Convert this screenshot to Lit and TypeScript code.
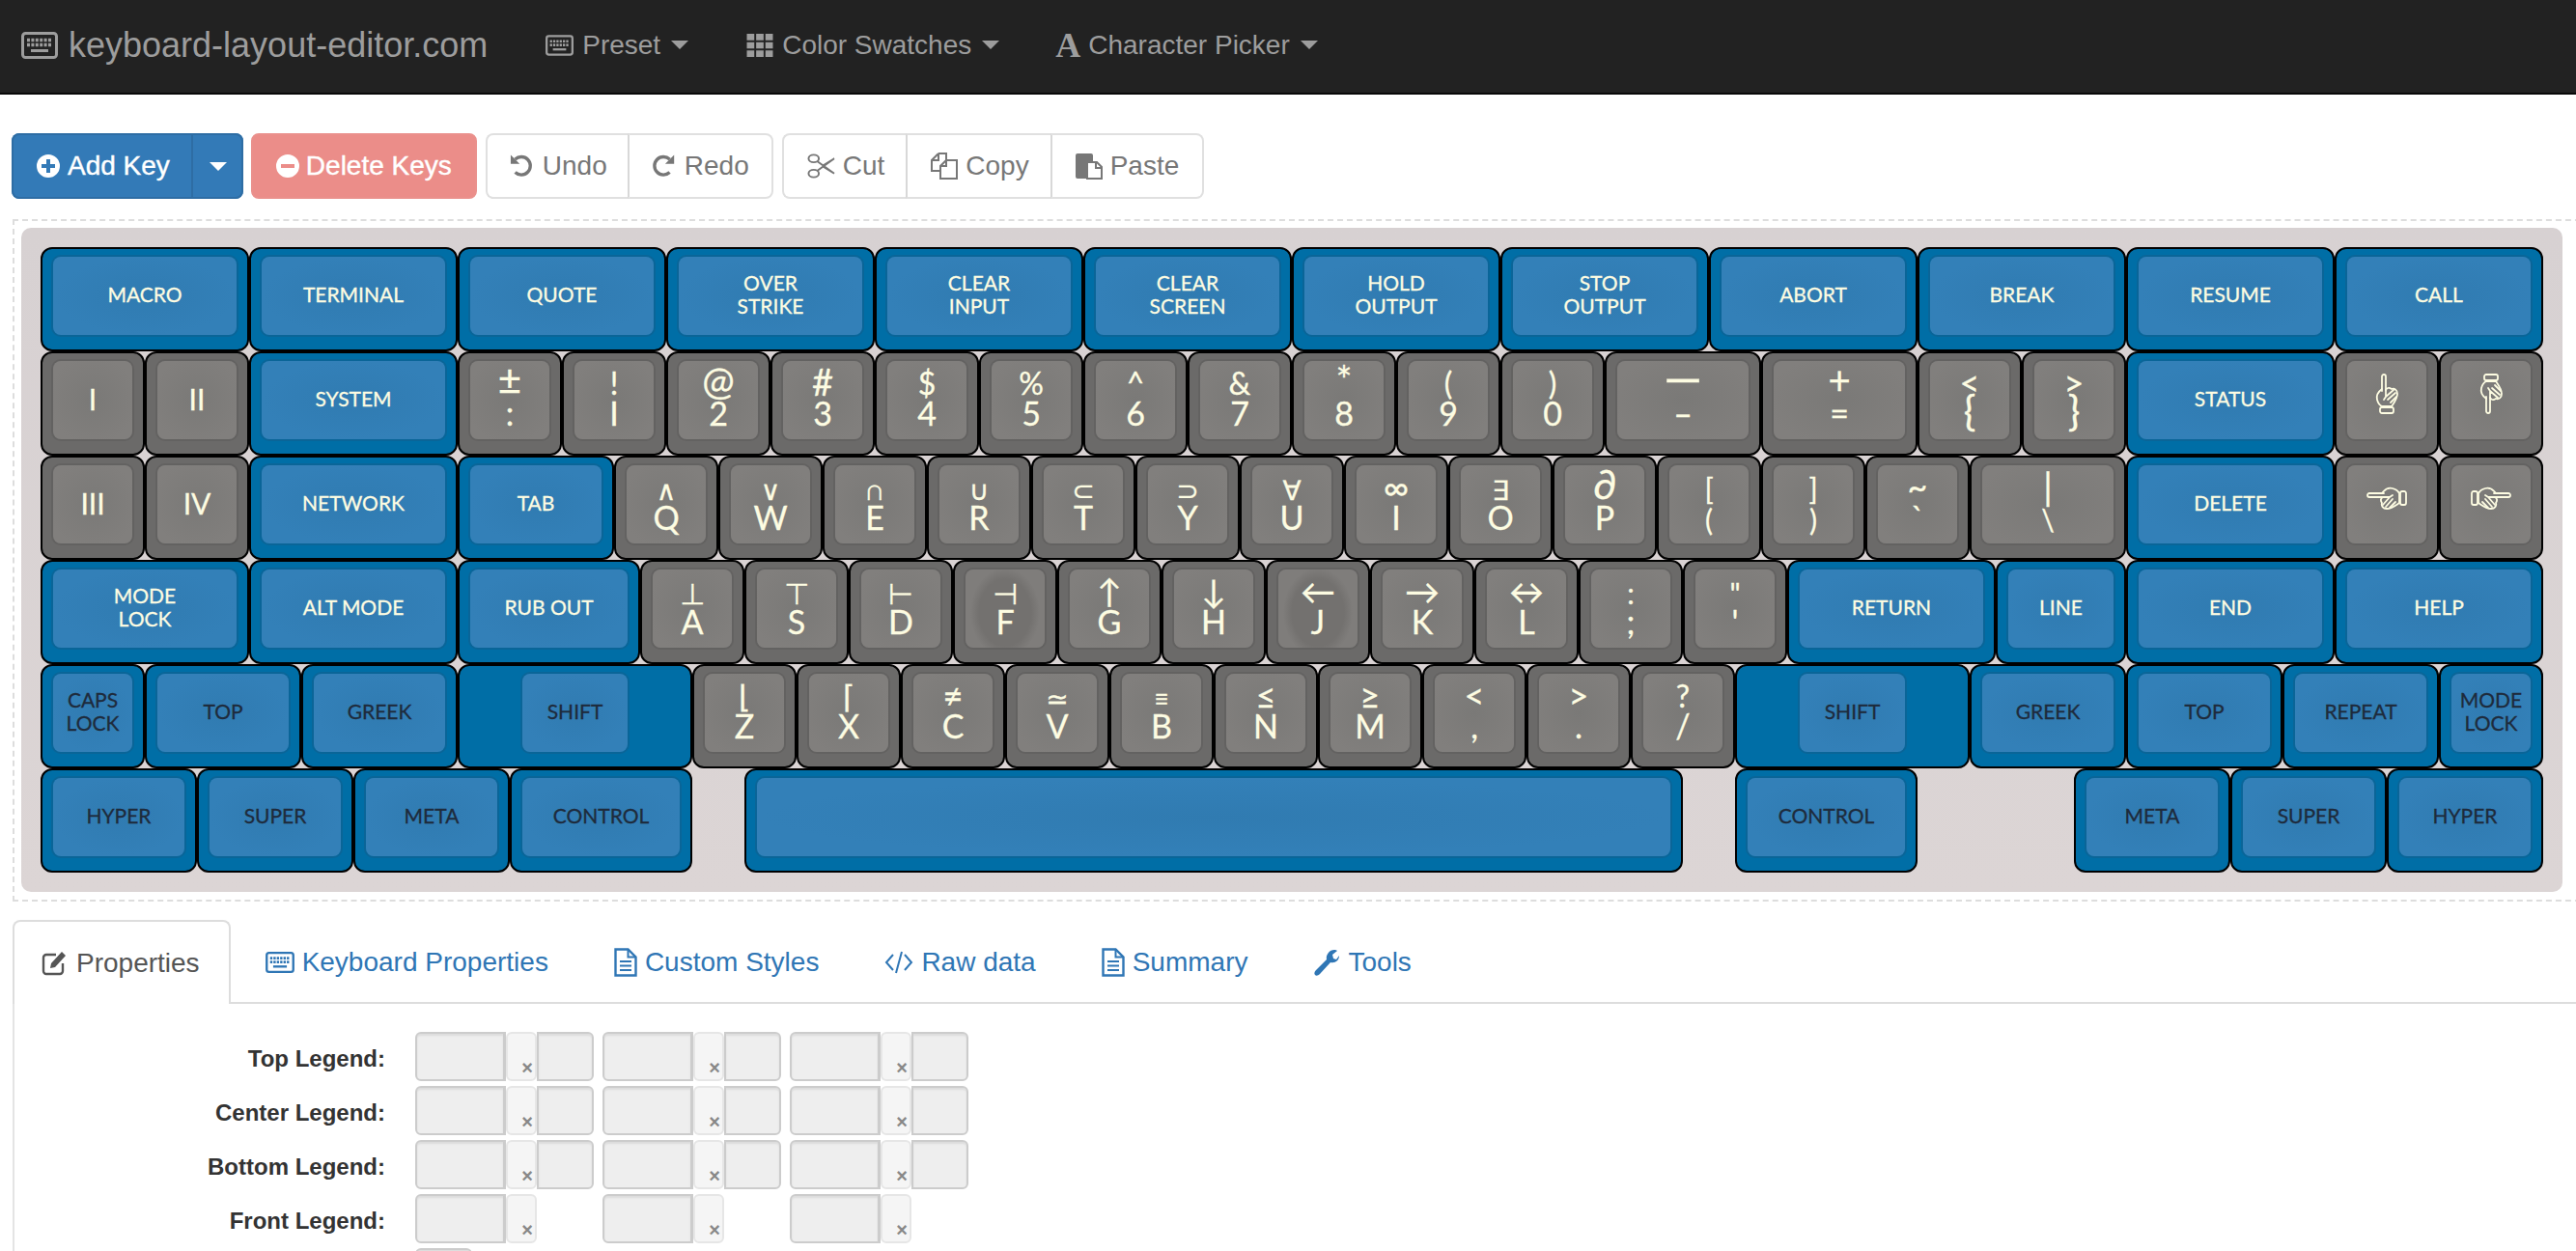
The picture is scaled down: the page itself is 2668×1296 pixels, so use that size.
import { LitElement, html, css, svg } from 'lit';
import { customElement } from 'lit/decorators.js';

type KeyDef = { w: number; kind: 'blue' | 'dark' | 'gray'; top?: string; bottom?: string; cap?: number; dish?: boolean; gap?: boolean };

const b = (w: number, top = ''): KeyDef => ({ w, kind: 'blue', top });
const d = (w: number, top = '', cap?: number): KeyDef => ({ w, kind: 'dark', top, cap });
const g = (top: string, bottom = '', w = 1, dish = false): KeyDef => ({ w, kind: 'gray', top, bottom, dish });
const gap = (w: number): KeyDef => ({ w, kind: 'gray', gap: true });

const rows: KeyDef[][] = [
  [b(2, 'MACRO'), b(2, 'TERMINAL'), b(2, 'QUOTE'), b(2, 'OVER\nSTRIKE'), b(2, 'CLEAR\nINPUT'), b(2, 'CLEAR\nSCREEN'), b(2, 'HOLD\nOUTPUT'), b(2, 'STOP\nOUTPUT'), b(2, 'ABORT'), b(2, 'BREAK'), b(2, 'RESUME'), b(2, 'CALL')],
  [g('I'), g('II'), b(2, 'SYSTEM'), g('±', ':'), g('!', 'I'), g('@', '2'), g('#', '3'), g('$', '4'), g('%', '5'), g('^', '6'), g('&', '7'), g('*', '8'), g('(', '9'), g(')', '0'), g('—', '–', 1.5), g('+', '=', 1.5), g('<', '{'), g('>', '}'), b(2, 'STATUS'), g('☝'), g('☟')],
  [g('III'), g('IV'), b(2, 'NETWORK'), b(1.5, 'TAB'), g('∧', 'Q'), g('∨', 'W'), g('∩', 'E'), g('∪', 'R'), g('⊂', 'T'), g('⊃', 'Y'), g('∀', 'U'), g('∞', 'I'), g('∃', 'O'), g('∂', 'P'), g('[', '('), g(']', ')'), g('~', '`'), g('|', '\\', 1.5), b(2, 'DELETE'), g('☜'), g('☞')],
  [b(2, 'MODE\nLOCK'), b(2, 'ALT MODE'), b(1.75, 'RUB OUT'), g('⊥', 'A'), g('⊤', 'S'), g('⊢', 'D'), g('⊣', 'F', 1, true), g('↑', 'G'), g('↓', 'H'), g('←', 'J', 1, true), g('→', 'K'), g('↔', 'L'), g(':', ';'), g('"', "'"), b(2, 'RETURN'), b(1.25, 'LINE'), b(2, 'END'), b(2, 'HELP')],
  [d(1, 'CAPS\nLOCK'), d(1.5, 'TOP'), d(1.5, 'GREEK'), d(2.25, 'SHIFT', 1.25), g('⌊', 'Z'), g('⌈', 'X'), g('≠', 'C'), g('≃', 'V'), g('≡', 'B'), g('≤', 'N'), g('≥', 'M'), g('<', ','), g('>', '.'), g('?', '/'), d(2.25, 'SHIFT', 1.25), d(1.5, 'GREEK'), d(1.5, 'TOP'), d(1.5, 'REPEAT'), d(1, 'MODE\nLOCK')],
  [d(1.5, 'HYPER'), d(1.5, 'SUPER'), d(1.5, 'META'), d(1.75, 'CONTROL'), gap(0.5), d(9), gap(0.5), d(1.75, 'CONTROL'), gap(1.5), d(1.5, 'META'), d(1.5, 'SUPER'), d(1.5, 'HYPER')],
];

const UNIT = 108;
const TOP_SIZE = 32;
const BASELINE = 0.387; // Lato: distance from line centre to baseline, in em

// top legends that are not the default size
const topSizes: Record<string, number> = {
  '@': 40, '#': 38, '*': 40,
  '—': 50, '+': 40, '<': 36, '>': 36, '±': 42,
  '∧': 28, '∨': 28, '∩': 28, '∪': 28, '⊂': 28, '⊃': 28, '∀': 28, '∞': 36, '∃': 28, '∂': 42,
  '⊥': 30, '⊤': 30, '⊢': 30, '⊣': 30, '↑': 34, '↓': 34, '←': 36, '→': 36, '↔': 36,
  '[': 30, ']': 30, '~': 36, '|': 38, '"': 30, ':': 30,
  '≠': 36, '≃': 28, '≡': 26, '≤': 36, '≥': 36,
};
// bottom legends that are not the default size
const bottomSizes: Record<string, number> = { '(': 30, ')': 30, '\\': 30, '{': 42, '}': 42 };

const hands: Record<string, string> = { '☝': 'up', '☟': 'down', '☜': 'left', '☞': 'right' };

const handShape = svg`
  <path d="M7 18V3a2 2 0 0 1 4 0v14" />
  <path d="M7 16c-4 3-6 7-5 11s3 6 5 7h10c2-3 6-8 6-13 0-4-3-6-6-5-3-2-5-1-6 1" />
  <path d="M11 17v7l-2 3M11 24l8-7M13 27l8-7M16 30l6-6" />
  <rect x="5" y="35" width="14" height="6" rx="2" />
`;

// font-awesome style icons, redrawn by hand
const icons = {
  keyboard: svg`<rect x="1.5" y="1.5" width="35" height="25" rx="3" fill="none" stroke="currentColor" stroke-width="3"/><path d="M6 8.5h26M6 13.5h26" stroke="currentColor" stroke-width="3.4" stroke-dasharray="3 1.4"/><path d="M10 19.5h18" stroke="currentColor" stroke-width="3"/>`,
  th: svg`<path d="M0 1h8v7H0zM10 1h8v7h-8zM20 1h8v7h-8zM0 10h8v7H0zM10 10h8v7h-8zM20 10h8v7h-8zM0 19h8v7H0zM10 19h8v7h-8zM20 19h8v7h-8z" fill="currentColor"/>`,
  plus: svg`<path fill-rule="evenodd" fill="currentColor" d="M12 0a12 12 0 1 0 0 24 12 12 0 0 0 0-24zM10 5h4v5h5v4h-5v5h-4v-5H5v-4h5z"/>`,
  minus: svg`<path fill-rule="evenodd" fill="currentColor" d="M12 0a12 12 0 1 0 0 24 12 12 0 0 0 0-24zM5 10h14v4H5z"/>`,
  undo: svg`<path d="M6 6.500A10 10 0 1 1 6 21" fill="none" stroke="currentColor" stroke-width="3.6"/><path d="M1 1.500v10h10z" fill="currentColor"/>`,
  redo: svg`<path d="M20 6.500A10 10 0 1 0 20 21" fill="none" stroke="currentColor" stroke-width="3.6"/><path d="M25 1.500v10H15z" fill="currentColor"/>`,
  cut: svg`<g fill="none" stroke="currentColor" stroke-width="2"><ellipse cx="7" cy="6" rx="5.500" ry="4"/><ellipse cx="7" cy="22" rx="5.500" ry="4"/><path d="M11 9l18 13M11 19 29 6M29 6 16 14M29 22 16 14"/></g>`,
  copy: svg`<g fill="none" stroke="currentColor" stroke-width="2"><path d="M8 1h8v7M8 1 1 8v11h9M8 1v7H1"/><path d="M16 8h11v19H10V14z" fill="#fff"/><path d="M16 8v6h-6"/></g>`,
  paste: svg`<path fill="currentColor" d="M0 3a2 2 0 0 1 2-2h14a2 2 0 0 1 2 2v6h-5v18H2a2 2 0 0 1-2-2z"/><path d="M15 10h7l5 5v12H12V10z" fill="#fff" stroke="currentColor" stroke-width="2"/><path d="M21 10v6h6" fill="none" stroke="currentColor" stroke-width="2"/>`,
  edit: svg`<path d="M22 14v8a3 3 0 0 1-3 3H5a3 3 0 0 1-3-3V8a3 3 0 0 1 3-3h10" fill="none" stroke="currentColor" stroke-width="2.400"/><path d="M10 14 21 2l4 4-11 12-5 1z" fill="currentColor"/>`,
  file: svg`<path d="M1.500 1.500h13l8 8v19h-21z" fill="none" stroke="currentColor" stroke-width="2.400"/><path d="M14.500 1.500v8h8M6 14h12M6 18.500h12M6 23h12" fill="none" stroke="currentColor" stroke-width="2"/>`,
  code: svg`<path d="M9 6 2 14l7 8M21 6l7 8-7 8M18 3l-6 22" fill="none" stroke="currentColor" stroke-width="2"/>`,
  wrench: svg`<path fill="currentColor" d="M27 7c0 5-4 8-9 7L7 26c-2 2-4 2-5 1s-1-3 1-5l11-11C13 6 17 1 22 1c1 0 2 0 3 1l-5 4 1 4 3 1 3-4z"/>`,
};

const icon = (name: keyof typeof icons, w: number, h: number, vb: string) =>
  html`<svg class="icon" width=${w} height=${h} viewBox=${vb}>${icons[name]}</svg>`;

// keeps every legend on the same baseline whatever its size
const legendStyle = (size: number) =>
  `font-size:${size}px;transform:translateY(${(-BASELINE * (size - TOP_SIZE)).toFixed(1)}px)`;

@customElement('kb-key')
export class KbKey extends LitElement {
  static properties = { def: { attribute: false } };
  def!: KeyDef;

  static styles = css`
    :host {
      display: block;
      height: 108px;
      flex: none;
    }
    .cap {
      box-sizing: border-box;
      height: 108px;
      border: 2px solid #000;
      border-radius: 12px;
      padding: 8px 11px 15px;
      display: flex;
      justify-content: center;
      font-family: Lato, 'DejaVu Sans', sans-serif;
      -webkit-text-stroke: 0.3px currentColor;
    }
    .blue {
      background: #006ea6;
    }
    .gray {
      background: #6b6a69;
    }
    .top {
      box-sizing: border-box;
      flex: 1;
      height: 81px;
      border-radius: 8px;
      display: flex;
      flex-direction: column;
      align-items: center;
      justify-content: center;
      text-align: center;
      white-space: pre-line;
      color: #fdfce2;
    }
    .blue .top {
      font-size: 21px;
      line-height: 24px;
      box-shadow: 0 0 0 2px #0a6598;
      background: radial-gradient(ellipse at center, #307bb1 0%, #3380b8 70%);
      padding-bottom: 4px;
    }
    .dark .top {
      color: #1e2b3c;
    }
    .gray .top {
      font-size: 32px;
      line-height: 32px;
      box-shadow: 0 0 0 2px #636261;
      background: radial-gradient(ellipse at center, #7a7977 0%, #817f7d 80%);
      padding-bottom: 3px;
    }
    .gray .top.dish {
      background: radial-gradient(ellipse 36px 46px at 50% 55%, #73716f 0 75%, #7f7d7b 100%);
    }
    .single {
      font-size: 30px;
    }
    .hand {
      width: 24px;
      height: 42px;
      margin-bottom: 10px;
      fill: none;
      stroke: #fdfce2;
      stroke-width: 1.8;
      overflow: visible;
      stroke-linejoin: round;
      stroke-linecap: round;
    }
    .hand.down {
      transform: scaleY(-1);
    }
    .hand.left {
      transform: scaleX(-1) rotate(90deg);
    }
    .hand.right {
      transform: rotate(90deg);
    }
  `;

  render() {
    const k = this.def;
    const w = k.w * UNIT;
    if (k.gap) return html`<div style="width:${w}px"></div>`;
    const capStyle = k.cap ? `flex: 0 0 ${k.cap * UNIT - 26}px` : '';
    const blue = k.kind !== 'gray';
    const hand = hands[k.top ?? ''];
    return html`
      <div class="cap ${blue ? 'blue' : 'gray'} ${k.kind === 'dark' ? 'dark' : ''}" style="width:${w}px">
        <div class="top ${k.dish ? 'dish' : ''}" style=${capStyle}>
          ${blue
            ? k.top
            : hand
              ? html`<svg class="hand ${hand}" viewBox="0 0 24 42" aria-label=${k.top ?? ''}>${handShape}</svg>`
              : k.bottom
                ? html`<div style=${legendStyle(topSizes[k.top ?? ''] ?? TOP_SIZE)}>${k.top}</div>
                    <div style=${legendStyle(bottomSizes[k.bottom] ?? 34)}>${k.bottom}</div>`
                : html`<div class="single">${k.top}</div>`}
        </div>
      </div>
    `;
  }
}

@customElement('app-root')
export class AppRoot extends LitElement {
  static styles = css`
    :host {
      display: block;
      width: 2668px;
      height: 1296px;
      overflow: hidden;
      background: #fff;
      font-family: 'Liberation Sans', Arial, sans-serif;
      font-size: 28px;
      color: #333;
    }
    .icon {
      flex: none;
      display: block;
    }

    /* navbar */
    .navbar {
      box-sizing: border-box;
      display: flex;
      align-items: center;
      height: 98px;
      padding-bottom: 3px;
      background: #222;
      border-bottom: 2px solid #080808;
      color: #9d9d9d;
    }
    .brand {
      display: flex;
      align-items: center;
      gap: 11px;
      padding: 0 30px 0 22px;
      font-size: 36px;
    }
    .nav-item {
      display: flex;
      align-items: center;
      padding: 0 30px;
      gap: 9px;
    }
    .caret {
      width: 0;
      height: 0;
      border-left: 9px solid transparent;
      border-right: 9px solid transparent;
      border-top: 9px solid currentColor;
      margin-left: 2px;
    }
    .font-a {
      font-family: 'Liberation Serif', serif;
      font-weight: bold;
      font-size: 36px;
      line-height: 36px;
      margin: 0 -1px 0 -2px;
    }

    /* toolbar */
    .toolbar {
      display: flex;
      gap: 9px;
      margin: 40px 0 0 12px;
    }
    .group {
      display: flex;
    }
    .btn {
      box-sizing: border-box;
      height: 68px;
      display: flex;
      align-items: center;
      gap: 8px;
      padding: 0 24px;
      border: 2px solid #e0e0e0;
      background: #fff;
      color: #777;
      margin-left: -2px;
      border-right-width: 0;
    }
    .btn.tight {
      padding: 0 23px;
    }
    .group .btn:first-child {
      border-radius: 8px 0 0 8px;
      margin-left: 0;
    }
    .group .btn:last-child {
      border-radius: 0 8px 8px 0;
      border-right-width: 2px;
    }
    .btn + .btn {
      border-left: 2px solid #d8d8d8;
    }
    .primary {
      background: #337ab7;
      color: #fff;
      -webkit-text-stroke: 0.4px #fff;
      margin-right: -1px;
      border-radius: 8px;
    }
    .primary .btn {
      background: #337ab7;
      border-color: #2e6da4;
      color: #fff;
    }
    .primary .drop {
      padding: 0 15px;
    }
    .danger {
      box-sizing: border-box;
      height: 68px;
      display: flex;
      align-items: center;
      gap: 7px;
      padding: 0 24px;
      border-radius: 8px;
      border: 2px solid #ea908c;
      background: #eb8d89;
      color: #fff;
      -webkit-text-stroke: 0.4px #fff;
    }

    /* keyboard */
    .stage {
      box-sizing: border-box;
      width: 2700px;
      margin: 21px 0 0 13px;
      padding: 7px 0 8px 7px;
      border: 2px dashed #ddd;
    }
    .board {
      box-sizing: border-box;
      width: 2632px;
      padding: 20px;
      border-radius: 10px;
      background: linear-gradient(#d7d1d2, #dcd5d5);
    }
    .row {
      display: flex;
    }

    /* tabs */
    .tabs {
      display: flex;
      margin: 19px 0 0 13px;
      height: 85px;
      border-bottom: 2px solid #ddd;
    }
    .tab {
      box-sizing: border-box;
      display: flex;
      align-items: center;
      gap: 8px;
      height: 85px;
      padding: 2px 32px 0;
      margin-left: 4px;
      color: #2f76b5;
    }
    .tab.active {
      height: 87px;
      margin-left: 0;
      padding: 0 30px 0 28px;
      color: #555;
      background: #fff;
      border: 2px solid #ddd;
      border-bottom: 0;
      border-radius: 8px 8px 0 0;
    }

    /* legend form */
    .panel {
      margin-left: 13px;
      padding-top: 29px;
      border-left: 2px solid #e4e4e4;
      height: 300px;
    }
    .form-row {
      display: flex;
      align-items: center;
      height: 51px;
      margin-bottom: 5px;
    }
    .form-row label {
      box-sizing: border-box;
      width: 384px;
      margin-right: 31px;
      text-align: right;
      font-size: 24px;
      font-weight: bold;
      padding-top: 4px;
    }
    .cell {
      display: flex;
      width: 185px;
      margin-right: 9px;
    }
    .field {
      box-sizing: border-box;
      height: 51px;
      margin: 0;
      padding: 0;
      background: #eee;
      border: 2px solid #ccc;
      box-shadow: inset 0 2px 2px rgba(0, 0, 0, 0.075);
    }
    .field.main {
      width: 94px;
      border-radius: 6px 0 0 6px;
      border-right-width: 3px;
    }
    .field.small {
      width: 59px;
      border-radius: 0 6px 6px 0;
    }
    .field.solo {
      width: 59px;
      border-radius: 6px 6px 0 0;
    }
    .clear {
      box-sizing: border-box;
      width: 32px;
      height: 51px;
      background: #f5f5f5;
      border: 2px solid #e6e6e6;
      border-radius: 6px;
      display: flex;
      align-items: flex-end;
      justify-content: flex-end;
      padding: 0 2px 2px 0;
      color: #888;
      font-size: 20px;
      font-weight: bold;
      line-height: 20px;
    }
  `;

  private legendRow(label: string, withSmall: boolean) {
    return html`
      <div class="form-row">
        <label>${label}</label>
        ${[0, 1, 2].map(
          () => html`
            <div class="cell">
              <input class="field main" />
              <div class="clear">×</div>
              ${withSmall ? html`<input class="field small" />` : ''}
            </div>
          `
        )}
      </div>
    `;
  }

  render() {
    return html`
      <nav class="navbar">
        <div class="brand">${icon('keyboard', 38, 28, '0 0 38 28')}<span>keyboard-layout-editor.com</span></div>
        <div class="nav-item">${icon('keyboard', 29, 22, '0 0 38 28')}<span>Preset</span><i class="caret"></i></div>
        <div class="nav-item">${icon('th', 28, 26, '0 0 28 27')}<span>Color Swatches</span><i class="caret"></i></div>
        <div class="nav-item"><span class="font-a">A</span><span>Character Picker</span><i class="caret"></i></div>
      </nav>

      <div class="toolbar">
        <div class="group primary">
          <div class="btn">${icon('plus', 24, 24, '0 0 24 24')}<span>Add Key</span></div>
          <div class="btn drop"><i class="caret"></i></div>
        </div>
        <div class="danger">${icon('minus', 24, 24, '0 0 24 24')}<span>Delete Keys</span></div>
        <div class="group">
          <div class="btn tight">${icon('undo', 26, 28, '0 0 28 28')}<span>Undo</span></div>
          <div class="btn tight">${icon('redo', 26, 28, '0 0 28 28')}<span>Redo</span></div>
        </div>
        <div class="group">
          <div class="btn">${icon('cut', 29, 28, '0 0 30 28')}<span>Cut</span></div>
          <div class="btn">${icon('copy', 28, 28, '0 0 28 28')}<span>Copy</span></div>
          <div class="btn">${icon('paste', 28, 28, '0 0 28 28')}<span>Paste</span></div>
        </div>
      </div>

      <div class="stage">
        <div class="board">
          ${rows.map((row) => html`<div class="row">${row.map((k) => html`<kb-key .def=${k}></kb-key>`)}</div>`)}
        </div>
      </div>

      <div class="tabs">
        <div class="tab active">${icon('edit', 28, 28, '0 0 28 28')}<span>Properties</span></div>
        <div class="tab">${icon('keyboard', 30, 22, '0 0 38 28')}<span>Keyboard Properties</span></div>
        <div class="tab">${icon('file', 24, 30, '0 0 24 30')}<span>Custom Styles</span></div>
        <div class="tab">${icon('code', 30, 28, '0 0 30 28')}<span>Raw data</span></div>
        <div class="tab">${icon('file', 24, 30, '0 0 24 30')}<span>Summary</span></div>
        <div class="tab">${icon('wrench', 28, 28, '0 0 28 28')}<span>Tools</span></div>
      </div>

      <div class="panel">
        ${this.legendRow('Top Legend:', true)}
        ${this.legendRow('Center Legend:', true)}
        ${this.legendRow('Bottom Legend:', true)}
        ${this.legendRow('Front Legend:', false)}
        <div class="form-row">
          <label></label>
          <input class="field solo" />
        </div>
      </div>
    `;
  }
}
